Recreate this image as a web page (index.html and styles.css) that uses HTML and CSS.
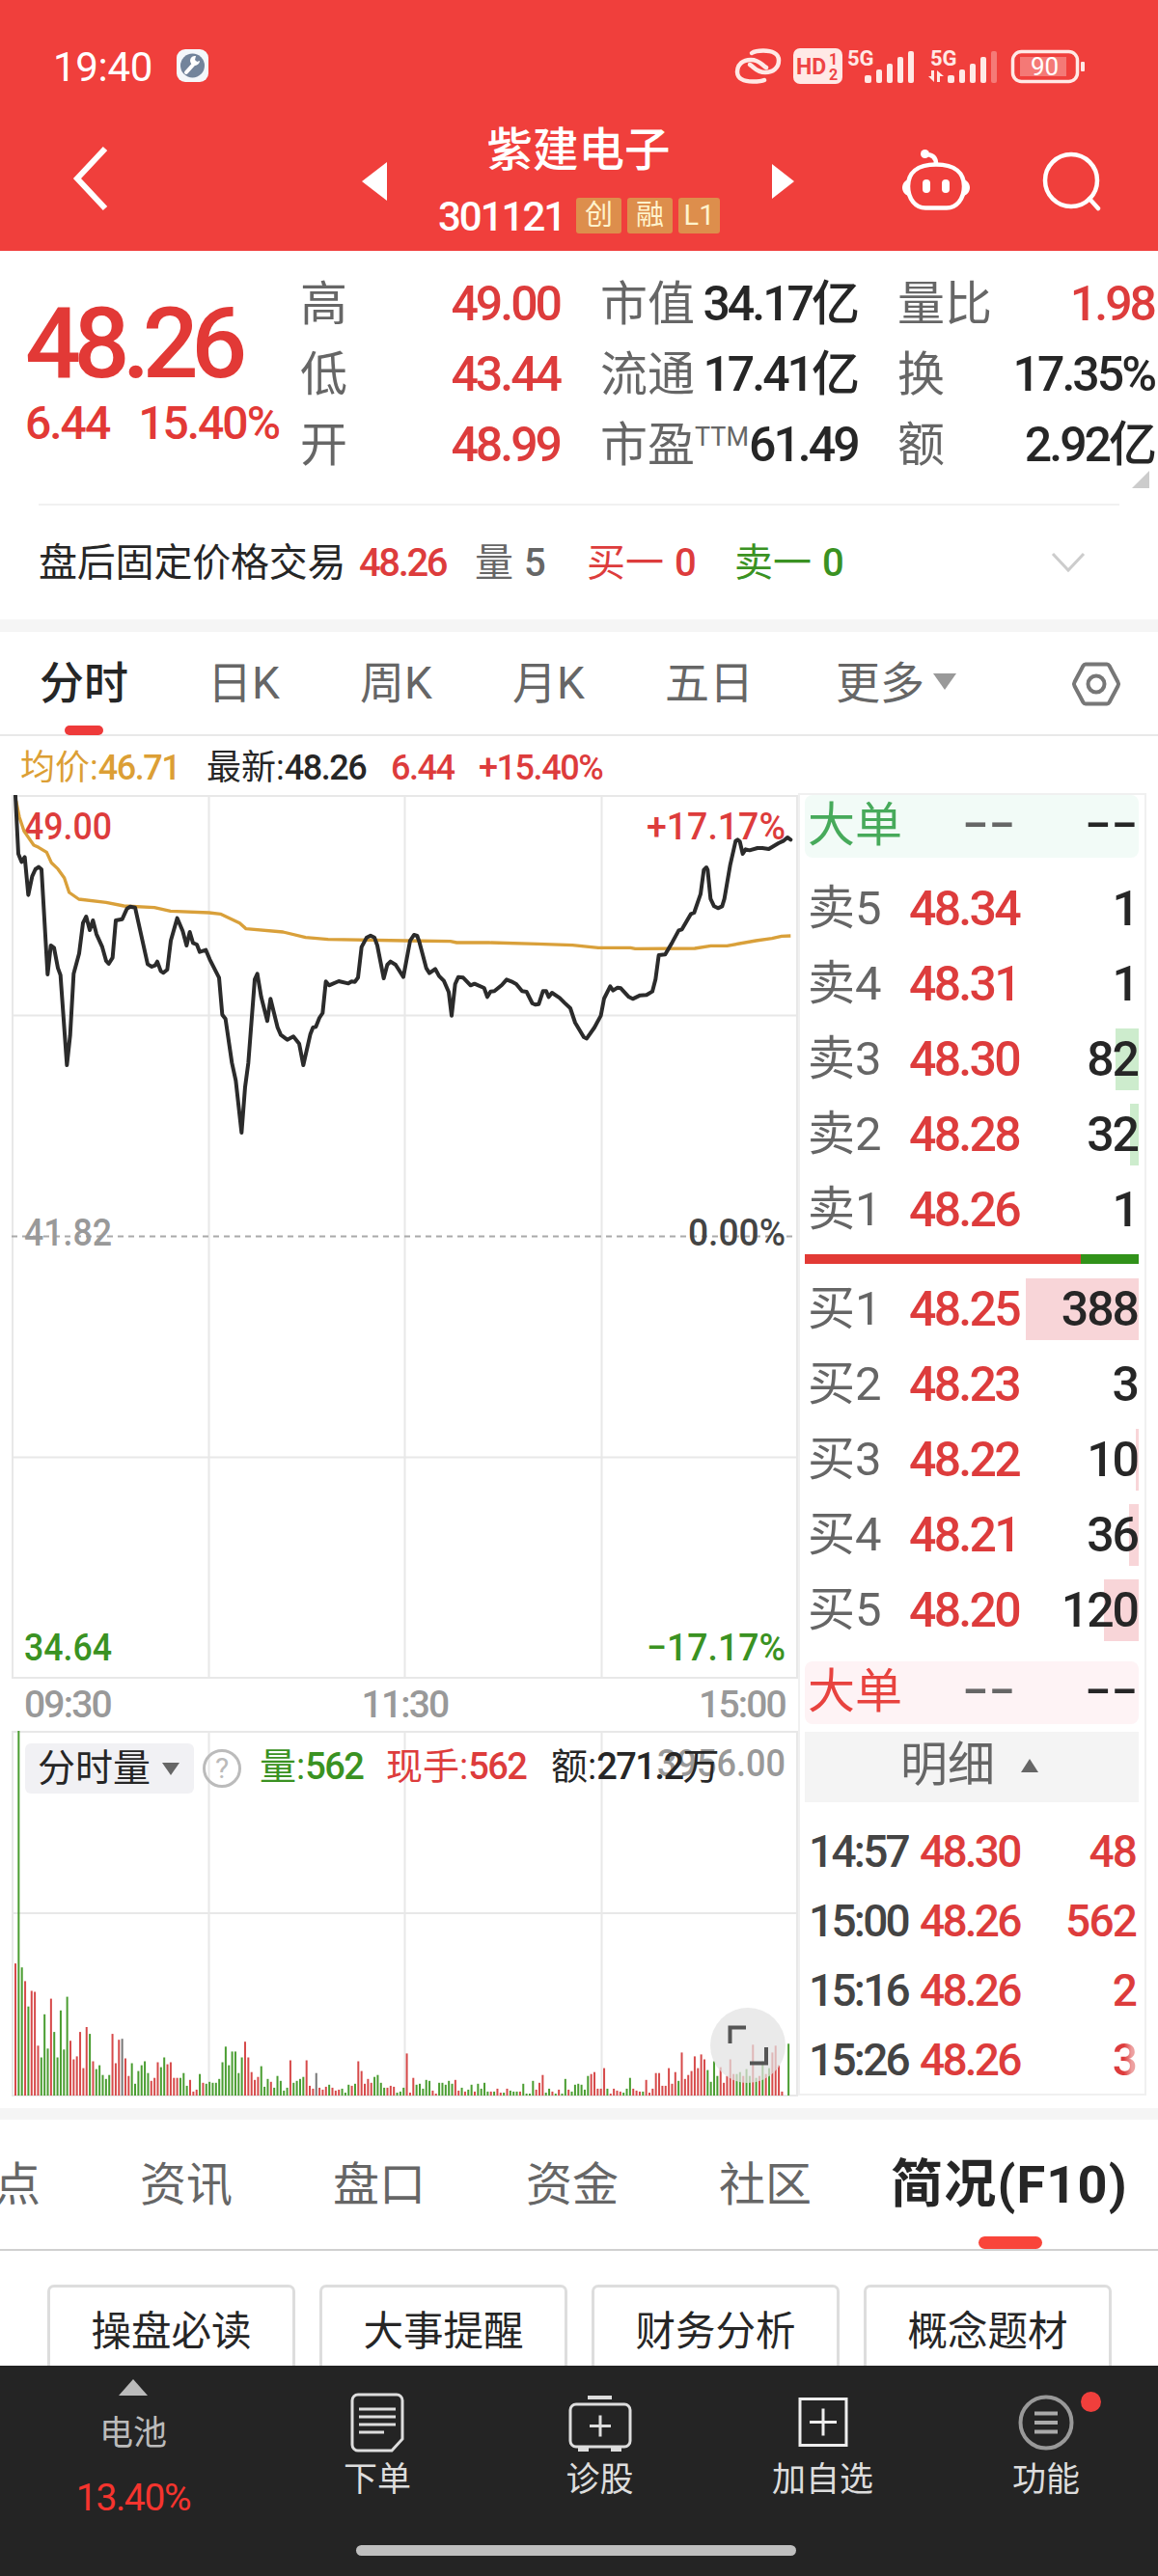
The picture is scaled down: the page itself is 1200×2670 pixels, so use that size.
FILE: index.html
```
<!DOCTYPE html>
<html lang="zh-CN">
<head>
  <meta charset="UTF-8">
  <meta name="viewport" content="width=device-width, initial-scale=1.0">
  <title>紫建电子 301121</title>
  <link rel="stylesheet" href="styles.css">
</head>
<body>
  <header class="header">
    <div class="status">
      <span class="clock">19:40</span>
      <svg class="app-icon" width="33" height="34" viewBox="0 0 33 34">
        <rect x="0" y="0" width="33" height="34" rx="9" fill="#f4f7fa"/>
        <circle cx="16.500" cy="17" r="12.500" fill="#73849b"/>
        <path d="M10 24l9-10" stroke="#fff" stroke-width="4" stroke-linecap="round"/>
        <path d="M24 12a5 5 0 1 1-4-5l-1 4 2 2z" fill="#fff"/>
      </svg>
      <svg class="status-icons" width="364" height="38" viewBox="0 0 364 38">
        <g fill="none" stroke="#ffe9e6" stroke-width="4.500" stroke-linecap="round">
          <path d="M17 5c3-2 7-2.500 12-2.500 9 0 16 3 16 10 0 8-6 12.500-14 12.500-9 0-11-5-16-8"/>
          <path d="M30 33c-3 1.500-7 1.500-12 1.500-9 0-16-3-16-10C2 16.500 8 12 16 12c9 0 11 5 16 8"/>
        </g>
        <rect x="60" y="0" width="51" height="37" rx="7" fill="#ffe9e6"/>
        <text x="63" y="27" class="s-hd">HD</text>
        <text x="97" y="17" class="s-num">1</text>
        <text x="97" y="33" class="s-num">2</text>
        <text x="116" y="18" class="s-5g">5G</text>
        <text x="202" y="18" class="s-5g">5G</text>
        <g fill="#ffe9e6">
          <rect x="134" y="28" width="7" height="8" rx="2"/>
          <rect x="146" y="22" width="6" height="14" rx="2"/>
          <rect x="157" y="16" width="6" height="20" rx="2"/>
          <rect x="168" y="9" width="6" height="27" rx="2"/>
          <rect x="179" y="3" width="6" height="33" rx="2"/>
          <rect x="220" y="28" width="7" height="8" rx="2"/>
          <rect x="232" y="22" width="6" height="14" rx="2"/>
          <rect x="243" y="16" width="6" height="20" rx="2"/>
          <rect x="254" y="9" width="6" height="27" rx="2"/>
          <rect x="265" y="3" width="6" height="33" rx="2" opacity=".35"/>
          <path d="M203 23h3v12l-6-6h3zM209 35h3v-6h4l-7-6z"/>
        </g>
        <rect x="287.500" y="3.500" width="67" height="31" rx="9" fill="none" stroke="#ffe9e6" stroke-width="3.500"/>
        <rect x="295" y="9" width="48" height="20" fill="#fff" opacity=".3"/>
        <text x="306" y="28" class="s-bat">90</text>
        <rect x="358" y="14" width="4" height="10" rx="1" fill="#ffe9e6"/>
      </svg>
    </div>
    <div class="title-bar">
      <svg class="back" width="38" height="68" viewBox="0 0 38 68"><path d="M34 3L5 34l29 31" fill="none" stroke="#fff" stroke-width="6"/></svg>
      <svg class="prev" width="26" height="40" viewBox="0 0 26 40"><path d="M26 0v40L0 20z" fill="#fff"/></svg>
      <div class="stock">
        <h1>紫建电子</h1>
        <div class="code-row">
          <span class="code">301121</span>
          <span class="badge">创</span><span class="badge">融</span><span class="badge badge-l1">L1</span>
        </div>
      </div>
      <svg class="next" width="23" height="36" viewBox="0 0 23 36"><path d="M0 0v36l23-18z" fill="#fff"/></svg>
      <svg class="robot" width="70" height="64" viewBox="0 0 70 64">
        <path d="M35 15.500c20 0 29 9 29 22.500S56 60.500 46 60.500H24C14 60.500 6 51.500 6 38S15 15.500 35 15.500z" fill="none" stroke="#fff" stroke-width="4.500"/>
        <path d="M35 15c0-6-3-10-11-10" fill="none" stroke="#fff" stroke-width="4.500"/>
        <circle cx="23.500" cy="4.500" r="4.500" fill="#fff"/>
        <path d="M6 31c-8 3-8 14 0 17zM64 31c8 3 8 14 0 17z" fill="#fff"/>
        <rect x="21" y="31" width="8" height="14" rx="4" fill="#fff"/>
        <rect x="41" y="31" width="8" height="14" rx="4" fill="#fff"/>
      </svg>
      <svg class="search" width="62" height="62" viewBox="0 0 62 62">
        <circle cx="30" cy="30" r="27" fill="none" stroke="#fff" stroke-width="4.500"/>
        <path d="M49 49l9 10" stroke="#fff" stroke-width="4.500" stroke-linecap="round"/>
      </svg>
    </div>
  </header>

  <section class="quote">
    <div class="price">
      <div class="price-now">48.26</div>
      <div class="price-diff"><span>6.44</span><span>15.40%</span></div>
    </div>
    <div class="stats">
      <div class="stat"><span>高</span><b class="up">49.00</b></div>
      <div class="stat"><span>市值</span><b>34.17亿</b></div>
      <div class="stat"><span>量比</span><b class="up">1.98</b></div>
      <div class="stat"><span>低</span><b class="up">43.44</b></div>
      <div class="stat"><span>流通</span><b>17.41亿</b></div>
      <div class="stat"><span>换</span><b>17.35%</b></div>
      <div class="stat"><span>开</span><b class="up">48.99</b></div>
      <div class="stat"><span>市盈<sup>TTM</sup></span><b>61.49</b></div>
      <div class="stat"><span>额</span><b>2.92亿</b></div>
    </div>
    <i class="corner"></i>
  </section>

  <section class="after-hours">
    <span class="ah-name">盘后固定价格交易</span>
    <b class="ah-price up">48.26</b>
    <span class="ah-vol">量 <b>5</b></span>
    <span class="ah-buy up">买一 <b>0</b></span>
    <span class="ah-sell down">卖一 <b>0</b></span>
    <svg class="chevron" width="36" height="24" viewBox="0 0 36 24"><path d="M2 3l16 17L34 3" fill="none" stroke="#ccc" stroke-width="3"/></svg>
  </section>

  <nav class="tabs">
    <span class="tab active">分时</span>
    <span class="tab">日K</span>
    <span class="tab">周K</span>
    <span class="tab">月K</span>
    <span class="tab">五日</span>
    <span class="tab">更多<i class="caret"></i></span>
    <svg class="gear" width="52" height="48" viewBox="0 0 52 48">
      <path d="M15 3.500h22a3 3 0 0 1 2.500 1.500l9 17a4 4 0 0 1 0 4l-9 17a3 3 0 0 1-2.500 1.500H15a3 3 0 0 1-2.500-1.500l-9-17a4 4 0 0 1 0-4l9-17A3 3 0 0 1 15 3.500z" fill="none" stroke="#777" stroke-width="4"/>
      <circle cx="26" cy="24" r="8.500" fill="none" stroke="#777" stroke-width="4"/>
    </svg>
  </nav>

  <main class="board">
    <div class="charts">
      <div class="legend">
        <span class="avg">均价:<b>46.71</b></span>
        <span class="last">最新:<b>48.26</b></span>
        <b class="up diff">6.44</b>
        <b class="up">+15.40%</b>
      </div>
      <svg class="price-chart" width="816" height="916" viewBox="0 0 816 916">
        <g class="grid">
          <rect x="1" y="1" width="813" height="914"/>
          <path d="M204.500 0v915M407.500 0v915M611.500 0v915M0 228.500h814M0 686.500h814"/>
        </g>
        <path d="M0 457.500h814" class="mid"/>
        <text x="13" y="46" class="up" textLength="91" lengthAdjust="spacingAndGlyphs">49.00</text>
        <text x="658" y="46" class="up" textLength="144" lengthAdjust="spacingAndGlyphs">+17.17%</text>
        <text x="13" y="467" class="gray" textLength="91" lengthAdjust="spacingAndGlyphs">41.82</text>
        <text x="701" y="467" class="dark" textLength="101" lengthAdjust="spacingAndGlyphs">0.00%</text>
        <text x="13" y="897" class="down" textLength="91" lengthAdjust="spacingAndGlyphs">34.64</text>
        <text x="658" y="897" class="down" textLength="144" lengthAdjust="spacingAndGlyphs">−17.17%</text>
        <g transform="translate(-12 -24) scale(.33333)">
          <polyline class="line-avg" points="50,90 60,140 75,185 105,228 120,235 145,250 160,283 180,302 200,330 215,375 245,396 330,406 385,417 480,422 530,433 650,438 685,442 745,470 765,488 880,498 950,515 1020,521 1260,525 1400,527 1420,531 1520,531 1670,535 1780,539 1860,547 1960,547 1975,550 2160,549 2210,541 2260,541 2350,525 2400,518 2430,511 2458,510"/>
          <polyline class="line-price" points="48,75 57,255 67,280 77,265 88,383 100,325 110,303 120,296 129,303 148,630 158,540 168,547 180,610 188,632 208,912 218,820 229,628 246,565 258,470 268,450 279,492 289,462 300,505 318,545 330,588 338,597 350,578 360,462 380,458 395,425 405,419 420,422 459,598 472,606 482,602 489,590 500,620 508,625 520,615 531,525 551,455 568,495 580,540 590,498 600,532 612,537 621,560 640,554 652,583 681,640 691,755 701,768 721,905 733,960 751,1122 762,980 772,905 792,645 800,628 812,700 831,775 841,706 863,795 873,818 893,833 912,823 930,845 943,912 965,815 973,795 982,793 993,765 1003,750 1013,652 1023,664 1053,651 1083,658 1093,652 1103,653 1113,640 1124,545 1140,515 1152,509 1164,515 1173,540 1193,642 1204,600 1214,590 1230,600 1254,638 1275,525 1287,507 1297,510 1304,530 1325,610 1335,626 1353,613 1365,635 1380,650 1395,685 1404,758 1415,660 1425,638 1440,640 1463,664 1475,659 1505,672 1515,700 1525,683 1537,682 1560,663 1575,646 1590,652 1605,660 1623,682 1637,684 1655,720 1665,724 1675,722 1688,682 1698,682 1706,700 1716,687 1740,703 1755,718 1773,735 1788,780 1815,825 1824,829 1848,795 1868,758 1878,705 1897,667 1906,680 1920,671 1930,673 1955,700 1967,706 1990,695 2010,694 2028,683 2038,645 2048,570 2068,568 2090,530 2110,493 2120,490 2148,442 2158,438 2178,380 2188,305 2196,297 2200,305 2209,395 2220,418 2232,424 2245,418 2252,395 2270,290 2287,215 2293,211 2300,217 2309,255 2318,241 2330,244 2355,237 2370,237 2390,240 2420,222 2435,215 2448,204 2458,211"/>
        </g>
      </svg>
      <div class="times"><span>09:30</span><span>11:30</span><span>15:00</span></div>
      <div class="volume">
        <svg width="816" height="379" viewBox="0 0 816 379">
          <g class="grid">
            <rect x="1" y="1" width="813" height="377"/>
            <path d="M204.500 0v378M407.500 0v378M611.500 0v378M0 189h814"/>
          </g>
          <text x="669" y="47" class="gray" textLength="133" lengthAdjust="spacingAndGlyphs">3956.00</text>
          <g id="bars"></g>
        </svg>
        <div class="volume-legend">
          <span class="select">分时量<i class="caret caret-dark"></i></span>
          <span class="help">?</span>
          <span class="v1 down">量:<b>562</b></span>
          <span class="v2 up">现手:<b>562</b></span>
          <span class="v3">额:<b>271.2</b>万</span>
        </div>
        <svg class="expand" width="78" height="78" viewBox="0 0 78 78">
          <circle cx="39" cy="39" r="39" fill="#e2e2e2" opacity=".72"/>
          <path d="M20.500 37V20.500H37M58 41v16.500H41" fill="none" stroke="#555" stroke-width="4"/>
        </svg>
      </div>
    </div>

    <aside class="orders">
      <div class="big big-sell"><span>大单</span><em>−−</em><b>−−</b></div>
      <div class="levels levels-sell">
        <div class="level"><span>卖5</span><b class="up">48.34</b><b class="qty">1</b></div>
        <div class="level"><span>卖4</span><b class="up">48.31</b><b class="qty">1</b></div>
        <div class="level"><span>卖3</span><b class="up">48.30</b><b class="qty">82</b><i style="width:24px"></i></div>
        <div class="level"><span>卖2</span><b class="up">48.28</b><b class="qty">32</b><i style="width:9px"></i></div>
        <div class="level"><span>卖1</span><b class="up">48.26</b><b class="qty">1</b></div>
      </div>
      <div class="ratio"><i style="width:286px"></i></div>
      <div class="levels levels-buy">
        <div class="level"><span>买1</span><b class="up">48.25</b><b class="qty">388</b><i style="width:117px"></i></div>
        <div class="level"><span>买2</span><b class="up">48.23</b><b class="qty">3</b></div>
        <div class="level"><span>买3</span><b class="up">48.22</b><b class="qty">10</b><i style="width:3px"></i></div>
        <div class="level"><span>买4</span><b class="up">48.21</b><b class="qty">36</b><i style="width:10px"></i></div>
        <div class="level"><span>买5</span><b class="up">48.20</b><b class="qty">120</b><i style="width:36px"></i></div>
      </div>
      <div class="big big-buy"><span>大单</span><em>−−</em><b>−−</b></div>
      <div class="detail">明细<i></i></div>
      <div class="trades">
        <div class="trade"><b>14:57</b><b class="up">48.30</b><b class="up">48</b></div>
        <div class="trade"><b>15:00</b><b class="up">48.26</b><b class="up">562</b></div>
        <div class="trade"><b>15:16</b><b class="up">48.26</b><b class="up">2</b></div>
        <div class="trade"><b>15:26</b><b class="up">48.26</b><b class="up fade">3</b></div>
      </div>
    </aside>
  </main>

  <nav class="info-tabs">
    <span>点</span>
    <span>资讯</span>
    <span>盘口</span>
    <span>资金</span>
    <span>社区</span>
    <span class="active">简况(F10)</span>
  </nav>

  <div class="chips">
    <span>操盘必读</span>
    <span>大事提醒</span>
    <span>财务分析</span>
    <span>概念题材</span>
  </div>

  <footer class="footer">
    <div class="foot sector">
      <i class="tri-up"></i>
      <span>电池</span>
      <b>13.40%</b>
    </div>
    <div class="foot">
      <svg width="56" height="62" viewBox="0 0 56 62" fill="none" stroke="#ddd" stroke-width="3">
        <path d="M8 2h40a6 6 0 0 1 6 6v40L43 60H8a6 6 0 0 1-6-6V8a6 6 0 0 1 6-6z"/>
        <path d="M9 17h38M9 25h38M9 33h38M9 41h26"/>
      </svg>
      <span>下单</span>
    </div>
    <div class="foot">
      <svg width="66" height="62" viewBox="0 0 66 62" fill="none" stroke="#ddd" stroke-width="3">
        <path d="M20 5h25" stroke-width="4"/>
        <rect x="2" y="12" width="62" height="44" rx="6"/>
        <path d="M22 34.500h22M33 23.500v22"/>
        <path d="M10 59h11M44 59h11" stroke-width="4"/>
      </svg>
      <span>诊股</span>
    </div>
    <div class="foot">
      <svg width="56" height="62" viewBox="0 0 56 62" fill="none" stroke="#eee" stroke-width="3">
        <rect x="4" y="6.500" width="48" height="48"/>
        <path d="M14 30.500h28M28 16.500v28"/>
      </svg>
      <span>加自选</span>
    </div>
    <div class="foot">
      <svg width="60" height="62" viewBox="0 0 60 62" fill="none" stroke="#999" stroke-width="4">
        <circle cx="30" cy="31" r="26.500"/>
        <path d="M18 21.500h24M18 31h24M18 40.500h24" stroke="#aaa"/>
      </svg>
      <i class="dot"></i>
      <span>功能</span>
    </div>
    <div class="home-bar"></div>
  </footer>

  <script>
    // minute volume: r = up, g = down, k = flat, number = bar height
    const data = "r135 g373 g131 r117 g91 r107 r106 r51 g39 g83 g48 r99 g65 g39 g87 g47 g101 r56 r37 r40 r65 r28 r70 g63 r35 g27 g31 g21 g17 g21 r63 r33 r57 k58 r38 r20 g33 g12 g25 g31 g35 g23 r15 r18 r34 g29 g39 r32 r34 r18 r18 g18 g23 g10 r16 r4 r6 g22 r13 g12 g14 g13 g13 g17 g34 g50 g31 g45 g45 g23 g39 r55 r39 r24 r16 r19 g30 g9 g17 r14 g8 g20 g15 g5 g8 r36 g13 g15 g17 g19 r36 r10 r7 k23 r8 r6 r9 g11 r8 r5 r6 g7 g3 g11 r10 g12 r35 r25 r12 r17 r13 g19 g21 g13 g8 r8 r10 r9 g3 g4 g8 " +
      "r43 r3 r18 g11 g12 g7 g16 g15 r5 r2 g13 g13 g11 g15 g12 r16 r5 g8 r4 g6 g11 r4 g12 g7 g13 g4 r4 g4 r7 r3 g3 r7 g5 g4 g4 r4 g12 g2 g2 g15 r6 r13 r21 g3 g7 r4 g2 r6 g2 g17 r6 g4 g11 g12 g11 g6 g20 r22 r24 r7 r7 r28 g7 r2 r7 r5 r4 g3 g7 g18 r7 r5 r4 g4 r16 r3 r7 r23 r23 r10 r10 r28 r12 r24 g15 r44 r17 r21 r25 r40 r28 r42 r37 g26 g14 g35 g20 r29 r13 r20 r37 r22 g22 g24 r20 g27 g20 r52 g18 r20 g35 r22 g28 r44 r51 r31 r4 r0 g53";
    const colors = { r: "#d64a4a", g: "#4a9d31", k: "#777" };
    document.getElementById("bars").innerHTML = data.split(" ").map((d, i) => {
      const h = Number(d.slice(1)) * 1.014;
      return `<rect x="${(3 + i * 3.352).toFixed(2)}" y="${(378 - h).toFixed(1)}" width="2" height="${h.toFixed(1)}" fill="${colors[d[0]]}"/>`;
    }).join("");
  </script>
</body>
</html>
```
FILE: styles.css
```
* { box-sizing: border-box; }
body { margin: 0; width: 1200px; height: 2670px; overflow: hidden; background: #fff; color: #262626; font-family: Roboto, "Noto Sans CJK SC", sans-serif; }
svg { display: block; flex: none; }
b { font-weight: 500; letter-spacing: -0.04em; }
i { display: block; }
.up { color: #dd3c3c; fill: #dd3c3c; }
.down { color: #3a9222; fill: #3a9222; }

/* header */
.header { height: 260px; background: #f03f3c; color: #fff; padding-top: 50px; }
.status { display: flex; height: 38px; padding-left: 55px; }
.clock { width: 128px; font-size: 42px; line-height: 39px; letter-spacing: -0.3px; }
.app-icon { margin-top: 1px; }
.status-icons { margin-left: auto; margin-right: 74px; overflow: visible; }
.status-icons text { font-family: Roboto, sans-serif; font-weight: 700; }
.s-hd { font-size: 23px; fill: #ee4444; }
.s-num { font-size: 16px; fill: #ee4444; }
.s-5g { font-size: 22px; fill: #ffe9e6; }
.status-icons .s-bat { font-size: 26px; font-weight: 400; fill: #fff; }
.title-bar { display: flex; height: 130px; padding-left: 75px; padding-top: 37px; }
.back { margin-top: 26px; }
.prev { margin-left: 262px; margin-top: 43px; }
.stock { width: 399px; text-align: center; }
.stock h1 { margin: 3px 0 0 -2px; font-size: 47.5px; line-height: 56px; font-weight: 500; }
.code-row { display: flex; justify-content: center; gap: 6px; margin-top: 21px; height: 37px; }
.code { width: 137px; font-size: 42px; line-height: 39px; font-weight: 500; letter-spacing: -2px; text-align: left; margin-left: -1px; }
.badge { width: 47px; background: #dd8e4c; border-radius: 3px; color: #fff3cd; font-size: 29px; line-height: 37px; }
.badge-l1 { width: 43px; }
.next { margin-top: 45px; }
.robot { margin-left: 112px; margin-top: 30px; }
.search { margin-left: 75px; margin-top: 32px; }

/* quote */
.quote { position: relative; display: flex; height: 262px; padding: 19px 2px 0 26px; }
.price { width: 285px; color: #e23936; }
.price-now { margin-top: 27px; font-size: 102px; line-height: 100px; font-weight: 500; letter-spacing: -7.5px; }
.price-diff { display: flex; gap: 30px; margin-top: 8px; font-size: 48px; line-height: 50px; font-weight: 500; letter-spacing: -2px; }
.stats { display: grid; grid-template-columns: 269px 266px 266px; column-gap: 42px; grid-auto-rows: 73px; }
.stat { display: flex; justify-content: space-between; font-size: 50px; line-height: 73px; white-space: nowrap; }
.stat b { letter-spacing: -0.06em; }
.stat span { color: #666; font-size: 49px; }
.stat sup { font-size: 27px; line-height: 0; vertical-align: 16px; }
.corner { position: absolute; right: 9px; bottom: 16px; border-left: 18px solid transparent; border-bottom: 18px solid #ccc; }

/* after-hours line */
.after-hours { display: flex; height: 133px; border-bottom: 13px solid #f5f5f5; padding-left: 40px; font-size: 40px; line-height: 124px; position: relative; white-space: nowrap; }
.after-hours::before { content: ""; position: absolute; left: 40px; right: 40px; top: 0; height: 2px; background: #f1f1f1; }
.ah-name { width: 332px; letter-spacing: -0.2px; }
.ah-price { width: 120px; letter-spacing: -0.06em; }
.ah-vol { width: 116px; color: #666; }
.ah-buy { width: 153px; }
.ah-sell { width: 328px; }
.ah-vol b, .ah-buy b, .ah-sell b { margin-left: 1px; }
.chevron { margin-top: 49px; }

/* period tabs */
.tabs { display: flex; position: relative; height: 108px; border-bottom: 2px solid #e8e8e8; font-size: 46px; line-height: 106px; color: #666; padding-left: 41px; }
.tab { position: relative; width: 158px; white-space: nowrap; }
.tab:nth-child(1) { width: 174px; }
.tab:nth-child(5) { width: 177px; }
.tab:nth-child(6) { width: 244px; }
.tab.active { color: #262626; font-weight: 500; }
.tab.active::after { content: ""; position: absolute; left: 26px; top: 97px; width: 40px; height: 10px; border-radius: 5px; background: #ee3a3a; }
.caret { display: inline-block; margin-left: 9px; vertical-align: 9px; border: 12px solid transparent; border-top: 17px solid #999; border-bottom: 0; }
.gear { margin-top: 30px; }

/* charts */
.board { display: flex; height: 1422px; }
.charts { width: 827px; padding-left: 12px; }
.legend { display: flex; height: 61px; padding-left: 9px; font-size: 36px; line-height: 67px; white-space: nowrap; }
.avg { width: 193px; color: #dc9f35; }
.last { width: 191px; }
.diff { width: 91px; }
.price-chart text, .volume text { font-family: Roboto, sans-serif; font-weight: 500; font-size: 39px; }
.grid { fill: none; stroke: #e8e8e8; stroke-width: 2; }
.mid { stroke: #aaa; stroke-width: 2; stroke-dasharray: 6 5; }
.gray { fill: #999; }
.dark { fill: #444; }
.line-avg { fill: none; stroke: #d9a03a; stroke-width: 10; stroke-linejoin: round; }
.line-price { fill: none; stroke: #2b2b2b; stroke-width: 12; stroke-linejoin: round; stroke-linecap: round; }
.times { display: flex; justify-content: space-between; height: 54px; padding: 0 13px; font-size: 39px; line-height: 55px; font-weight: 500; letter-spacing: -1.8px; color: #999; }
.volume { position: relative; }
.volume-legend { position: absolute; left: 14px; top: 13px; display: flex; height: 52px; font-size: 38px; line-height: 48px; white-space: nowrap; }
.select { width: 175px; height: 52px; padding-left: 13px; font-size: 39px; line-height: 52px; background: #f1f1f4; border-radius: 6px; }
.caret-dark { margin-left: 12px; vertical-align: 6px; border-width: 13px 9px 0; border-top-color: #666; }
.help { width: 40px; height: 40px; margin: 6px 0 0 9px; border: 3px solid #bbb; border-radius: 50%; color: #bbb; font-size: 30px; line-height: 34px; text-align: center; }
.v1 { width: 131px; margin-left: 19px; }
.v2 { width: 171px; }
.expand { position: absolute; left: 724px; top: 287px; }

/* order book */
.orders { width: 361px; margin-top: 59px; height: 1350px; border: 2px solid #f0f0f0; padding: 0 6px 0 5px; }
.big { display: grid; grid-template-columns: 160px 1fr 1fr; height: 65px; line-height: 64px; font-size: 49px; padding: 0 1px 0 3px; border-radius: 8px; }
.big em { font-style: normal; color: #666; text-align: left; font-weight: 500; }
.big b { text-align: right; letter-spacing: 0; color: #262626; }
.big span { white-space: nowrap; }
.big-sell { background: #f2fbf7; color: #47aa5b; }
.big-buy { background: #fef3f5; color: #e8433f; margin-top: 14px; }
.levels { display: grid; grid-auto-rows: 78px; }
.levels-sell { margin-top: 14px; }
.levels-buy { margin-top: 8px; }
.level { position: relative; display: grid; grid-template-columns: 105px 130px 1fr; align-items: center; padding: 0 1px 0 3px; font-size: 50px; line-height: 64px; white-space: nowrap; }
.level b { letter-spacing: -0.055em; }
.level span { color: #666; font-size: 49px; }
.level .qty { text-align: right; position: relative; z-index: 1; letter-spacing: -0.04em; }
.level i { position: absolute; right: 0; top: 7px; height: 64px; }
.levels-sell i { background: #cdeccd; }
.levels-buy i { background: #f8d5d8; }
.ratio { height: 10px; margin-top: 7px; background: #31921a; }
.ratio i { height: 10px; background: #e23a35; }
.detail { display: flex; align-items: center; height: 73px; margin-top: 8px; padding-left: 99px; background: #f4f4f4; color: #666; font-size: 49px; line-height: 68px; padding-bottom: 4px; }
.detail i { margin-left: 27px; border: 9px solid transparent; border-bottom: 14px solid #666; border-top: 0; }
.trades { margin-top: 15px; }
.trade { display: grid; grid-template-columns: 115px 120px 1fr; height: 72px; padding: 0 3px 0 4px; font-size: 46px; line-height: 72px; color: #444; }
.trade b { letter-spacing: -0.06em; }
.trade b:last-child { text-align: right; letter-spacing: -0.04em; }
.fade { background: linear-gradient(90deg, #dd3c3c 88%, #eda0a0 96%); -webkit-background-clip: text; background-clip: text; -webkit-text-fill-color: transparent; }

/* info tabs */
.info-tabs { display: flex; position: relative; height: 148px; border-top: 12px solid #f5f5f5; border-bottom: 2px solid #d0d0d0; font-size: 48px; line-height: 136px; color: #666; white-space: nowrap; }
.info-tabs span { width: 200px; }
.info-tabs span:nth-child(1) { width: 151px; margin-left: -6px; }
.info-tabs span:nth-child(5) { width: 178px; }
.info-tabs .active { position: relative; width: 260px; color: #262626; font-size: 54px; font-weight: 700; letter-spacing: 1.2px; }
.info-tabs .active::after { content: ""; position: absolute; left: 91px; top: 121px; width: 66px; height: 13px; border-radius: 7px; background: #f9453a; }
.chips { display: flex; gap: 25px; height: 119px; padding: 35px 0 0 49px; overflow: hidden; }
.chips span { width: 257px; height: 100px; border: 3px solid #ddd; border-radius: 7px; text-align: center; font-size: 41.5px; line-height: 91px; }

/* footer */
.footer { position: relative; display: grid; grid-template-columns: 276px 230px 231px 231px 232px; height: 220px; background: #242424; color: #ddd; }
.foot { position: relative; display: flex; flex-direction: column; align-items: center; padding-top: 28px; font-size: 35px; line-height: 50px; }
.foot span { margin-top: 4px; }
.sector { padding-top: 14px; color: #bbb; }
.tri-up { border: 15px solid transparent; border-bottom: 17px solid #bbb; border-top: 0; }
.sector span { margin-top: 15px; }
.sector b { color: #f5342e; margin-top: 16px; font-size: 39px; font-weight: 400; letter-spacing: -0.035em; }
.dot { position: absolute; left: 152px; top: 27px; width: 21px; height: 21px; border-radius: 50%; background: #f03f3c; }
.home-bar { position: absolute; left: 369px; top: 186px; width: 456px; height: 11px; border-radius: 6px; background: #bfbfbf; }
```
